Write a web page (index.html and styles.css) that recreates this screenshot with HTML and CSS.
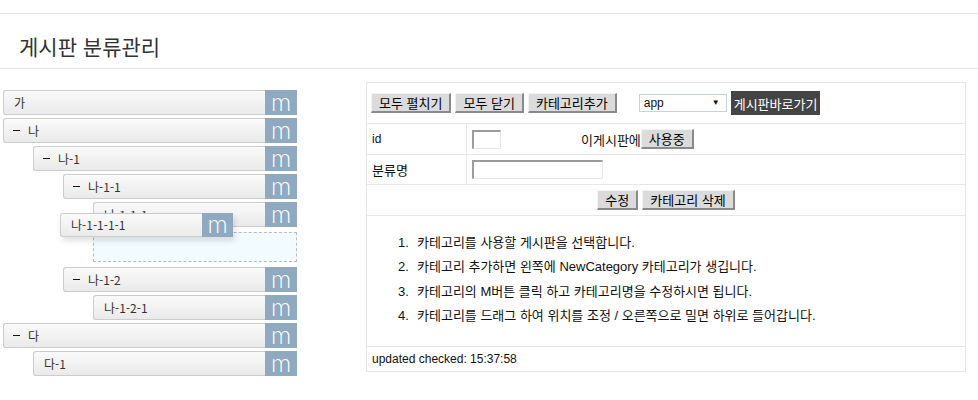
FILE: index.html
```html
<!DOCTYPE html>
<html lang="ko">
<head>
<meta charset="utf-8">
<title>게시판 분류관리</title>
<link rel="stylesheet" href="styles.css">
</head>
<body>
<div class="topbar"></div>
<header class="page-header"><h1>게시판 분류관리</h1></header>
<main class="content">
  <section class="tree-col">
    <ol class="dd-list">
      <li class="dd-item"><div class="dd-row"><div class="dd-handle">가</div><span class="dd-m">m</span></div></li>
      <li class="dd-item"><div class="dd-row"><div class="dd-handle"><span class="toggle"></span>나</div><span class="dd-m">m</span></div>
        <ol class="dd-list">
          <li class="dd-item"><div class="dd-row"><div class="dd-handle"><span class="toggle"></span>나-1</div><span class="dd-m">m</span></div>
            <ol class="dd-list">
              <li class="dd-item"><div class="dd-row"><div class="dd-handle"><span class="toggle"></span>나-1-1</div><span class="dd-m">m</span></div>
                <ol class="dd-list">
                  <li class="dd-item"><div class="dd-row"><div class="dd-handle">나-1-1-1</div><span class="dd-m">m</span></div></li>
                  <li class="dd-placeholder"></li>
                </ol>
              </li>
              <li class="dd-item"><div class="dd-row"><div class="dd-handle"><span class="toggle"></span>나-1-2</div><span class="dd-m">m</span></div>
                <ol class="dd-list">
                  <li class="dd-item"><div class="dd-row"><div class="dd-handle">나-1-2-1</div><span class="dd-m">m</span></div></li>
                </ol>
              </li>
            </ol>
          </li>
        </ol>
      </li>
      <li class="dd-item"><div class="dd-row"><div class="dd-handle"><span class="toggle"></span>다</div><span class="dd-m">m</span></div>
        <ol class="dd-list">
          <li class="dd-item"><div class="dd-row"><div class="dd-handle">다-1</div><span class="dd-m">m</span></div></li>
        </ol>
      </li>
    </ol>
    <div class="dd-dragel"><div class="dd-row"><div class="dd-handle">나-1-1-1-1</div><span class="dd-m">m</span></div></div>
  </section>

  <section class="panel">
    <div class="prow toolbar">
      <button class="btn">모두 펼치기</button>
      <button class="btn">모두 닫기</button>
      <button class="btn">카테고리추가</button>
      <span class="select-wrap"><select class="board-select"><option>app</option></select></span>
      <button class="btn-dark">게시판바로가기</button>
    </div>
    <div class="prow field">
      <div class="plabel">id</div>
      <div class="pvalue"><input class="inp inp-id" type="text"><span class="use-label">이게시판에</span><button class="btn">사용중</button></div>
    </div>
    <div class="prow field">
      <div class="plabel">분류명</div>
      <div class="pvalue"><input class="inp inp-name" type="text"></div>
    </div>
    <div class="prow actions">
      <button class="btn">수정</button>
      <button class="btn">카테고리 삭제</button>
    </div>
    <div class="prow guide">
      <ol class="guide-list">
        <li>카테고리를 사용할 게시판을 선택합니다.</li>
        <li>카테고리 추가하면 왼쪽에 NewCategory 카테고리가 생깁니다.</li>
        <li>카테고리의 M버튼 클릭 하고 카테고리명을 수정하시면 됩니다.</li>
        <li>카테고리를 드래그 하여 위치를 조정 / 오른쪽으로 밀면 하위로 들어갑니다.</li>
      </ol>
    </div>
    <div class="prow status">updated checked: 15:37:58</div>
  </section>
</main>
</body>
</html>
```

FILE: styles.css
```css
* { box-sizing: border-box; }
html, body { margin: 0; padding: 0; background: #fff; }
body {
  width: 978px;
  height: 400px;
  overflow: hidden;
  font-family: "Liberation Sans", "Noto Sans CJK KR", sans-serif;
  font-size: 12px;
  color: #333;
}

.topbar { height: 14px; border-bottom: 1px solid #e5e5e5; }
.page-header { height: 55px; border-bottom: 1px solid #e5e5e5; padding: 19px 0 0 19px; }
.page-header h1 {
  margin: 0;
  font-family: "Noto Sans CJK KR", sans-serif;
  font-size: 21px;
  font-weight: 400;
  line-height: 26px;
  color: #333;
}

.content { display: flex; align-items: flex-start; }

/* tree */
.tree-col { position: relative; width: 297px; padding-left: 3px; margin-top: 21px; }
.dd-list { list-style: none; margin: 0; padding: 0; }
.dd-list .dd-list { padding-left: 30px; }
.dd-item { margin: 0; }
.dd-row { display: flex; height: 25px; margin-bottom: 3px; }
.dd-handle {
  flex: 1;
  display: flex;
  align-items: center;
  padding-left: 10px;
  border: 1px solid #ccc;
  border-right: 0;
  border-radius: 3px 0 0 3px;
  background: linear-gradient(#fafafa, #eaeaea);
  color: #333;
  font-family: "Noto Sans CJK KR", sans-serif;
  font-size: 12px;
  line-height: 16px;
  white-space: nowrap;
  overflow: hidden;
}
.toggle { width: 7px; height: 1px; background: #2a0a0a; margin: 0 8px 0 -1px; }
.dd-m {
  width: 32px;
  text-align: center;
  background: #8fa9c1;
  color: #fff;
  font-family: "Lato Light", "DejaVu Sans Light", "DejaVu Sans ExtraLight", "Roboto Light", "Open Sans Light", Lato, sans-serif;
  font-weight: 300;
  font-size: 25px;
  line-height: 22px;
  padding-bottom: 3px;
}
.dd-placeholder {
  height: 30px;
  margin: 5px 0;
  border: 1px dashed #bbb;
  background: #f2fbff;
}
.dd-dragel {
  position: absolute;
  left: 60px;
  top: 123px;
  width: 173px;
  box-shadow: 2px 4px 6px 0 rgba(0, 0, 0, 0.12);
}
.dd-dragel .dd-row { height: 24px; margin: 0; }
.dd-dragel .dd-m { width: 31px; line-height: 21px; }

/* panel */
.panel {
  width: 600px;
  margin: 13px 0 0 69px;
  border: 1px solid #e6e6e6;
  font-family: "Liberation Sans", "Noto Sans CJK KR", sans-serif;
  font-size: 12px;
  color: #111;
}
.prow { display: flex; align-items: center; border-bottom: 1px solid #e6e6e6; }
.prow:last-child { border-bottom: 0; }
.toolbar { height: 41px; padding-left: 4px; gap: 4px; }
.field { height: 31px; align-items: stretch; }
.field + .field { height: 30px; }
.plabel { width: 100px; border-right: 1px solid #e6e6e6; padding-left: 5px; display: flex; align-items: center; }
.field + .field .plabel { font-family: "Noto Sans CJK KR", sans-serif; font-size: 13px; }
.pvalue { flex: 1; padding-left: 5px; display: flex; align-items: center; }
.actions { height: 31px; justify-content: center; gap: 4px; }
.guide { height: 131px; align-items: flex-start; }
.status { height: 24px; padding-left: 5px; }

.btn {
  height: 20px;
  padding: 0 7px;
  font-family: "Noto Sans CJK KR", sans-serif;
  font-size: 13px;
  line-height: 16px;
  color: #000;
  background: #dbdbdb;
  border-style: solid;
  border-width: 1px 2px 2px 1px;
  border-color: #f2f2f2 #8a8a8a #8a8a8a #f2f2f2;
  border-radius: 0;
}
.select-wrap { position: relative; margin-left: 18px; display: inline-block; }
.select-wrap::after {
  content: "▼";
  position: absolute;
  right: 7px;
  top: 4px;
  font-size: 8px;
  color: #111;
  pointer-events: none;
}
.board-select {
  appearance: none;
  -webkit-appearance: none;
  width: 88px;
  height: 18px;
  padding: 0 0 0 4px;
  border: 1px solid #c5d3dc;
  background: #fff;
  font-family: "Liberation Sans", sans-serif;
  font-size: 12px;
  color: #111;
  border-radius: 0;
}
.btn-dark {
  height: 24px;
  padding: 0 3px;
  border: 0;
  background: #444;
  color: #fff;
  font-family: "Noto Sans CJK KR", sans-serif;
  font-size: 13px;
}
.inp {
  height: 19px;
  border-style: solid;
  border-width: 2px 1px 1px 2px;
  border-color: #9c9c9c #e6e6e6 #e6e6e6 #9c9c9c;
  background: #fff;
  padding: 0;
}
.inp-id { width: 29px; }
.inp-name { width: 131px; }
.use-label { margin-left: 80px; font-family: "Noto Sans CJK KR", sans-serif; font-size: 13px; }

.guide-list {
  list-style: none;
  margin: 0;
  padding: 15px 0 0 50px;
  font-family: "Liberation Sans", "Noto Sans CJK KR", sans-serif;
  font-size: 13px;
  counter-reset: step;
}
.guide-list li { line-height: 24.4px; counter-increment: step; }
.guide-list li::before { content: counter(step) "."; display: inline-block; width: 19px; margin-left: -19px; }
```
